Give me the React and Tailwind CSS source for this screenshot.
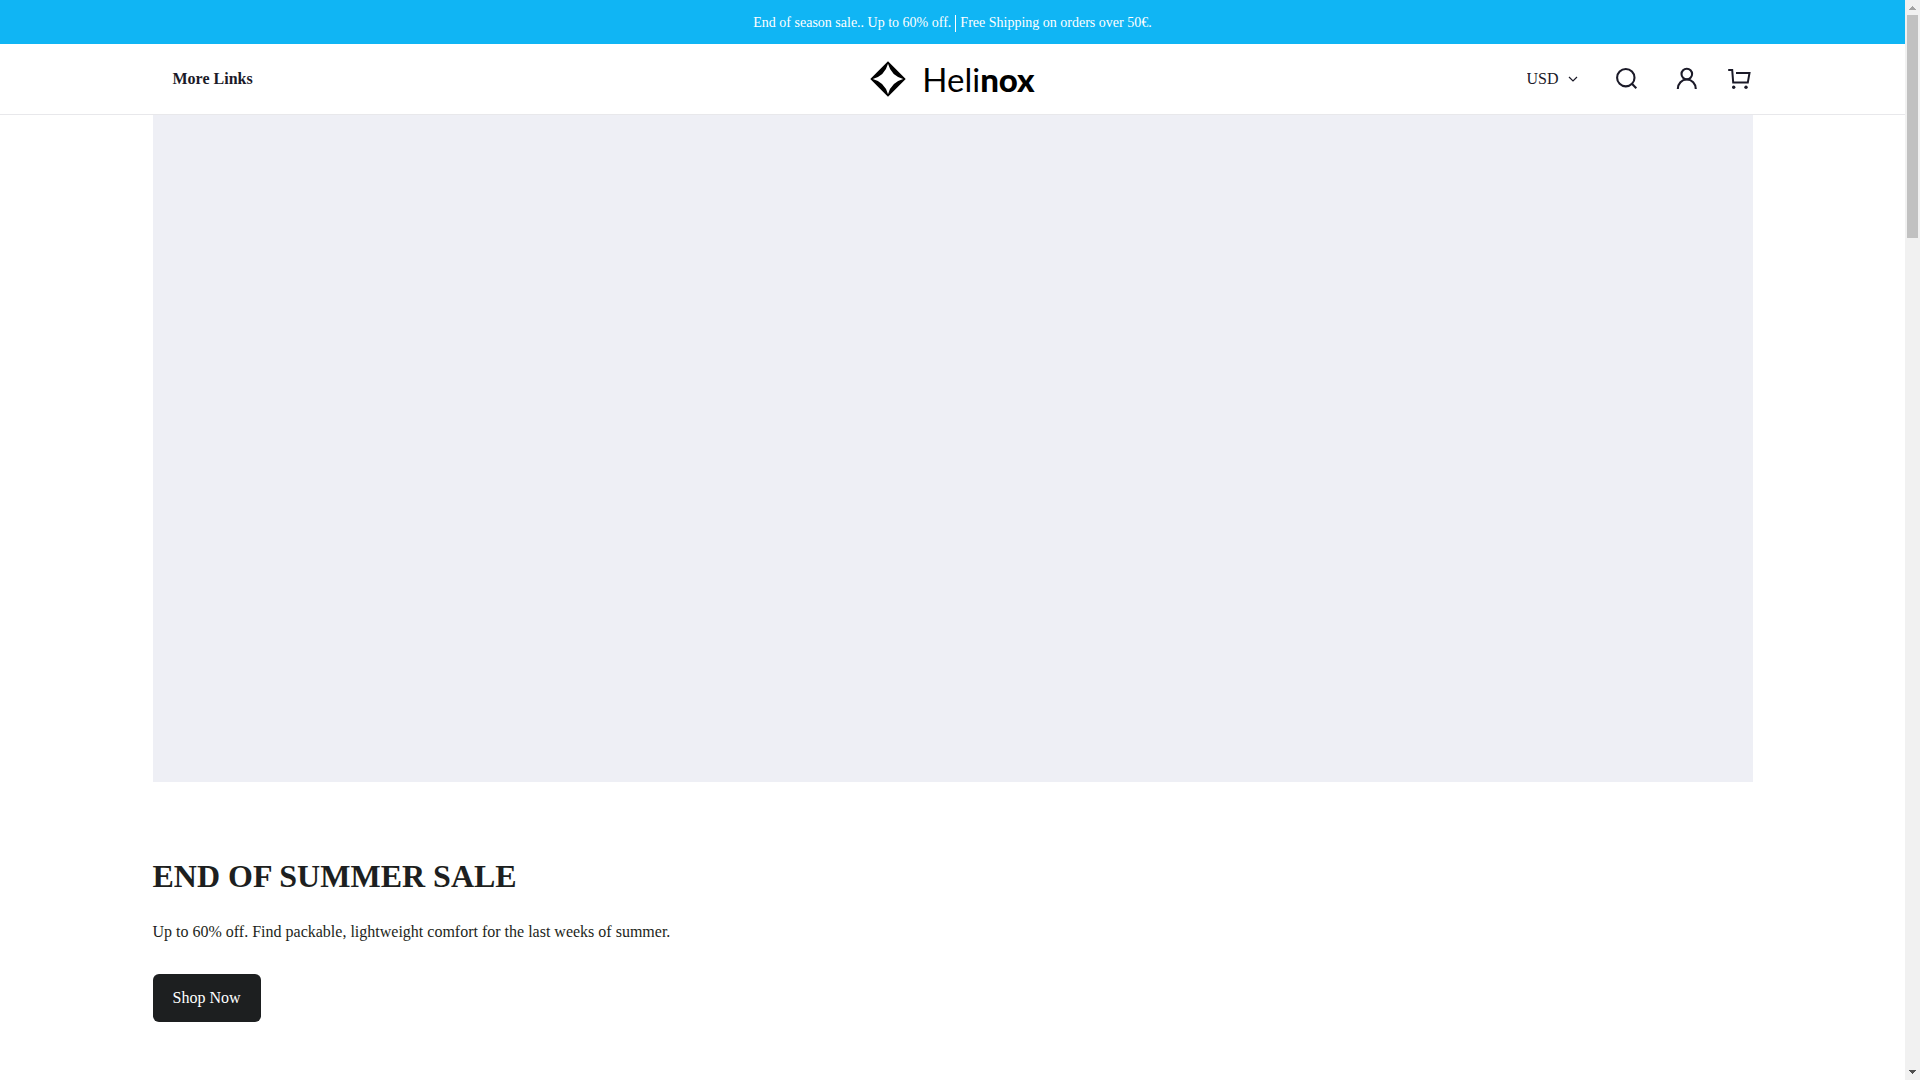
import { useState } from 'react';

const CURRENCIES = ['USD', 'EUR', 'GBP'];

const Logo = () => (
  <a href="#" aria-label="Helinox" className="flex items-center gap-4 text-black">
    <svg viewBox="0 0 36 36" className="w-9 h-9" fill="currentColor" fillRule="evenodd">
      <path d="M18 .3 35.700 18 18 35.700.3 18ZM18 2.800Q14.800 14.800 2.800 18 14.800 21.200 18 33.200 21.200 21.200 33.200 18 21.200 14.800 18 2.800Z" />
    </svg>
    <span className="font-['Lato',sans-serif] text-[33px] leading-9">
      Heli<span className="font-black">nox</span>
    </span>
  </a>
);

const SearchIcon = () => (
  <svg viewBox="0 0 24 24" className="w-6 h-6" fill="none" stroke="currentColor" strokeWidth="2.1">
    <circle cx="10.8" cy="10.7" r="8.7" />
    <path d="m16.9 16.8 4.4 4.4" />
  </svg>
);

const UserIcon = () => (
  <svg viewBox="0 0 24 24" className="w-6 h-6" fill="none" stroke="currentColor" strokeWidth="2.1">
    <circle cx="11.8" cy="7" r="5.3" />
    <path d="M2.800 22c0-5.500 4-9.500 9-9.500s9 4 9 9.500" />
  </svg>
);

const CartIcon = () => (
  <svg
    viewBox="0 0 24 24"
    className="w-6 h-6 overflow-visible"
    fill="none"
    stroke="currentColor"
    strokeWidth="2"
  >
    <path d="M-.8 3h4l1 12.600h14.600L20.500 6H7" />
    <circle cx="4.700" cy="20.300" r="1.700" fill="currentColor" stroke="none" />
    <circle cx="17" cy="20.300" r="1.700" fill="currentColor" stroke="none" />
  </svg>
);

const CurrencySelect = () => {
  const [currency, setCurrency] = useState('USD');

  return (
    <div className="flex items-center relative">
      <select
        aria-label="Currency"
        value={currency}
        onChange={e => setCurrency(e.target.value)}
        className="appearance-none bg-transparent w-13 h-6 leading-6"
      >
        {CURRENCIES.map(c => <option key={c}>{c}</option>)}
      </select>
      <svg
        viewBox="0 0 10 6"
        className="absolute right-px w-2.5 h-1.5 pointer-events-none"
        fill="none"
        stroke="currentColor"
        strokeWidth="1.2"
      >
        <path d="m1 1 4 4 4-4" />
      </svg>
    </div>
  );
};

const Header = () => (
  <header className="border-b border-[#e8e8eb] text-[#1b1a28]">
    <div className="max-w-[1600px] h-[70px] mx-auto grid grid-cols-[1fr_auto_1fr] items-center">
      <nav className="px-5">
        <a href="#" className="font-bold">More Links</a>
      </nav>
      <Logo />
      <div className="flex items-center justify-end gap-9">
        <CurrencySelect />
        <button aria-label="Search"><SearchIcon /></button>
        <div className="flex items-center gap-[30px]">
          <button aria-label="Account"><UserIcon /></button>
          <button aria-label="Cart"><CartIcon /></button>
        </div>
      </div>
    </div>
  </header>
);

const Hero = () => (
  <section className="max-w-[1600px] mx-auto text-[#1d1f20]">
    <div className="aspect-[12/5] bg-[#eeeff5]" />
    <div className="flex flex-col items-start pt-[74px]">
      <h1 className="text-[32px] leading-10 font-bold">END OF SUMMER SALE</h1>
      <p className="mt-6 leading-6">
        Up to 60% off. Find packable, lightweight comfort for the last weeks of summer.
      </p>
      <a href="#" className="mt-[30px] px-5 py-3 rounded-md bg-[#1d1f20] text-white leading-6">Shop Now</a>
    </div>
  </section>
);

const Scrollbar = () => (
  <div className="w-[15px] shrink-0 bg-[#f1f1f1] flex flex-col items-center" aria-hidden="true">
    <svg viewBox="0 0 15 15" className="w-[15px] h-[15px]" fill="#a3a3a3" shapeRendering="crispEdges">
      <path d="M4 10h7V9h-1V8H9V7H8V6H7v1H6v1H5v1H4Z" />
    </svg>
    <div className="w-[11px] h-[223px] bg-[#c1c1c1]" />
    <svg viewBox="0 0 15 15" className="w-[15px] h-[15px] mt-auto" fill="#505050" shapeRendering="crispEdges">
      <path d="M4 5h7v1h-1v1H9v1H8v1H7V8H6V7H5V6H4Z" />
    </svg>
  </div>
);

const App = () => (
  <div className="flex h-screen bg-white font-['Liberation_Serif',serif] text-base">
    <div className="flex-1 min-w-0 overflow-hidden">
      <div className="h-11 pt-0.5 flex items-center justify-center gap-1 bg-[#10b5f4] text-white text-sm">
        <span>End of season sale.. Up to 60% off.</span>
        <span className="w-px h-[17px] bg-white" />
        <span>Free Shipping on orders over 50€.</span>
      </div>
      <Header />
      <main>
        <Hero />
      </main>
    </div>
    <Scrollbar />
  </div>
);

export default App;
